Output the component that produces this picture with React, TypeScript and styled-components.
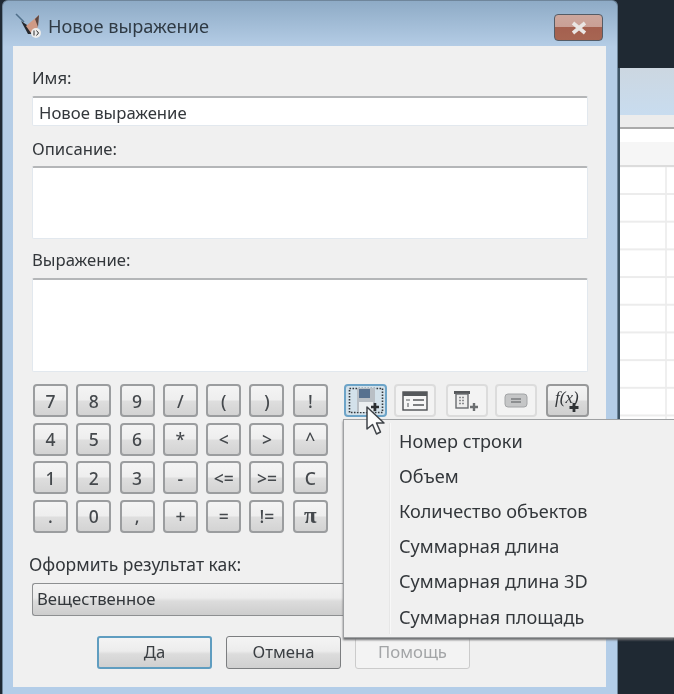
import React from "react";
import styled, { createGlobalStyle } from "styled-components";

const Global = createGlobalStyle`
  html, body { margin: 0; padding: 0; background: #1f2933; }
  * { box-sizing: border-box; }
`;
const Page = styled.div`
  position: relative; width: 674px; height: 694px; overflow: hidden; display: flex;
  background: #1f2933; font-family: "Noto Sans", "DejaVu Sans", sans-serif; color: #33383d;
  filter: blur(0.45px);
`;
const Win = styled.div`
  width: 616px; height: 694px; flex: none; margin-left: 2px; border-radius: 6px 6px 0 0;
  border: 1px solid #6f869b; border-bottom: 0;
  background: linear-gradient(180deg, #8eabc6 0, #b5cde6 46px, #b3cde8 100%);
  display: flex; flex-direction: column; padding: 0 11px 7px 10px;
`;
const TitleBar = styled.div`
  height: 45px; flex: none; display: flex; align-items: center; position: relative; gap: 7px;
`;
const TitleText = styled.span`
  font-size: 18.2px; color: #2f3a44; margin-top: 5px;
`;
const Close = styled.div`
  position: absolute; right: 3px; top: 13px; width: 49px; height: 27px; border-radius: 4px;
  border: 1.5px solid #555c66;
  background: linear-gradient(180deg, #cda79d 0, #c9a096 47%, #a4604f 48%, #a76552 100%);
  display: flex; align-items: center; justify-content: center;
`;
const Client = styled.div`
  flex: 1; background: #f0f0f0; padding: 22px 18px 0 19px; display: flex; flex-direction: column;
  position: relative;
`;
const Label = styled.div`
  font-size: 16.7px; line-height: 20px; height: 20px; color: #33373b;
`;
const ResultLabel = styled(Label)`
  font-size: 17.5px; margin-left: -3px; margin-top: -1px; margin-bottom: 1px;
`;
const Field = styled.div<{ $h: number; $mt: number; $mb: number }>`
  height: ${p => p.$h}px; margin-top: ${p => p.$mt}px; margin-bottom: ${p => p.$mb}px; background: #fff;
  flex: none; border: 1px solid #e2e8ee; border-top: 2px solid #b4b6b8; border-radius: 2px;
  padding: 3px 6px; font-size: 16.7px; color: #33373b;
`;
const Tools = styled.div`
  display: flex; height: 171px; margin-top: 12px; flex: none;
`;
const Keypad = styled.div`
  display: grid; grid-template-columns: repeat(7, 35px); grid-template-rows: repeat(4, 33px);
  column-gap: 8.3px; row-gap: 5.67px; width: 311px; margin-left: 1px; flex: none; align-content: start;
`;
const Key = styled.div<{ $serif?: boolean }>`
  border: 2px solid #9b9d9f; border-radius: 4px; color: #45494d;
  font-family: ${p => p.$serif ? '"Liberation Serif", serif' : "inherit"};
  font-size: ${p => p.$serif ? "23px" : "17.5px"};
  font-weight: ${p => p.$serif ? 700 : 500};
  display: flex; align-items: center; justify-content: center;
  background: linear-gradient(180deg, #f4f4f4 0, #eeeeee 48%, #dedede 52%, #d3d3d3 100%);
`;
const IconRow = styled.div`
  display: flex; height: 33px;
`;
const ToolBtn = styled.div<{ $w: number; $ml?: number; $state?: "focus" | "edge" }>`
  width: ${p => p.$w}px; height: 33px; margin-left: ${p => p.$ml ?? 0}px; border-radius: 4px; flex: none;
  display: flex; align-items: center; justify-content: center;
  border: ${p => p.$state === "focus" ? "2.5px solid #6da4c8" : p.$state === "edge" ? "2px solid #98999a" : "2px solid #dcdcdc"};
  background: ${p => p.$state === "focus" ? "#d3e1ea" : p.$state === "edge"
    ? "linear-gradient(180deg,#f3f3f3 0,#ececec 48%,#dadada 52%,#cfcfcf 100%)" : "#f3f3f3"};
`;
const Combo = styled.div`
  height: 33px; margin-top: 8px; width: 330px; flex: none; border: 1px solid #8d8f91; border-radius: 3px 0 0 3px; border-right: 0;
  padding: 4px 4px; font-size: 16.7px; line-height: 21px; color: #33373b;
  background: linear-gradient(180deg, #f3f3f3 0, #ececec 45%, #dcdcdc 55%, #cdcdcd 100%);
`;
const Actions = styled.div`
  display: flex; gap: 14px; margin-top: 20px; padding-left: 65px;
`;
const ActionBtn = styled.div<{ $state?: "default" | "off" }>`
  width: 115px; height: 33px; border-radius: 3px; font-size: 16.7px; display: flex; align-items: center; justify-content: center;
  padding-bottom: 3px;
  border: ${p => p.$state === "default" ? "2px solid #5f9dc0" : p.$state === "off" ? "1px solid #cbcbcb" : "1.5px solid #7c7e80"};
  color: ${p => p.$state === "off" ? "#a3a5a7" : "#3a3e42"};
  background: ${p => p.$state === "off" ? "#f3f3f3"
    : "linear-gradient(180deg,#f4f4f4 0,#ececec 45%,#dcdcdc 55%,#d0d0d0 100%)"};
`;
const Behind = styled.div`
  flex: 1; margin-top: 68px; display: flex; flex-direction: column; height: 570px;
  border-left: 2px solid #3d5364;
`;
const BehindHead = styled.div`
  height: 47px; flex: none; background: linear-gradient(180deg, #ccd7e1 0, #c8dcef 100%);
`;
const BehindStrip = styled.div`
  height: 14px; flex: none; background: #ececec; border-bottom: 2px solid #aaa;
`;
const HeaderRow = styled.div`
  height: 38px; flex: none; border-bottom: 2px solid #dcdcdc;
  background: linear-gradient(180deg, #fff 0, #fff 35%, #f6f6f6 36%, #f6f6f6 100%);
`;
const BehindGrid = styled.div`
  flex: 1; background-color: #fff;
  background-image: linear-gradient(#ececec 2px, transparent 2px), linear-gradient(90deg, #efefef 2px, transparent 2px);
  background-size: 100% 27.7px, 100% 100%; background-position: 0 26px, 45px 0;
`;
const Menu = styled.div`
  position: absolute; left: 343px; top: 419px; width: 331px; height: 219px; background: #f0f0f0;
  border: 1px solid #9fa1a3; border-right: 0; box-shadow: 0 2px 2px #6d6f71;
  display: flex; flex-direction: column; padding: 3px 0 0 0;
`;
const MenuGutter = styled.div`
  position: absolute; left: 45px; top: 3px; bottom: 3px; width: 2px; background: #e6e6e6; border-right: 1px solid #f8f8f8;
`;
const MenuItem = styled.div`
  height: 35.2px; padding-left: 55px; display: flex; align-items: center; font-size: 18.1px; color: #33373b;
`;
const Cursor = styled.svg`
  position: absolute; left: 365px; top: 405px;
`;
const AppIcon = styled.svg` flex: none; margin-left: 2px; margin-top: 5px; `;

const keys = ["7","8","9","/","(",")","!","4","5","6","*","<",">","^","1","2","3","-","<=",">=","C",".","0",",","+","=","!=","π"];
const items = ["Номер строки","Объем","Количество объектов","Суммарная длина","Суммарная длина 3D","Суммарная площадь"];

export default function App() {
  return (
    <Page>
      <Global />
      <Win>
        <TitleBar>
          <AppIcon width="26" height="26" viewBox="0 0 26 26">
            <path d="M1 1 L9 9" stroke="#4f6f8a" strokeWidth="1.6" />
            <path d="M6 8 L13 21 L21 21 L12 12 Z" fill="#26282c" />
            <path d="M11 13 L24 2 L22 19 L16 20 Z" fill="#cf9a86" />
            <path d="M20 6 L24 2 L23 14 Z" fill="#5b4640" />
            <circle cx="21" cy="20" r="5" fill="#ececec" />
            <path d="M19 17.5 v5 M21.5 17.5 l2 2.5 l-2 2.5" stroke="#2e2e2e" strokeWidth="1" fill="none" />
          </AppIcon>
          <TitleText>Новое выражение</TitleText>
          <Close>
            <svg width="18" height="14" viewBox="0 0 18 14">
              <path d="M3 2 L15 12 M15 2 L3 12" stroke="#e9e6e4" strokeWidth="3.6" />
            </svg>
          </Close>
        </TitleBar>
        <Client>
          <Label>Имя:</Label>
          <Field $h={30} $mt={8} $mb={13}>Новое выражение</Field>
          <Label>Описание:</Label>
          <Field $h={73} $mt={7} $mb={11}></Field>
          <Label>Выражение:</Label>
          <Field $h={94} $mt={8} $mb={0}></Field>
          <Tools>
            <Keypad>
              {keys.map((k, i) => <Key key={i} $serif={k === "π"}>{k}</Key>)}
            </Keypad>
            <IconRow>
              <ToolBtn $w={43} $state="focus">
                <svg width="36" height="27" viewBox="0 0 36 27">
                  <rect x="1.5" y="1.5" width="33" height="24" fill="none" stroke="#33373b" strokeWidth="1.6" strokeDasharray="1.6 1.4" />
                  <rect x="9" y="1" width="18" height="24" fill="#b9bfc5" />
                  <rect x="11" y="2" width="11" height="9" fill="#57718f" />
                  <rect x="11" y="15" width="14" height="10" fill="#eceff1" />
                  <path d="M27 16 v8 M23 20 h8" stroke="#2b2e31" strokeWidth="2.6" />
                </svg>
              </ToolBtn>
              <ToolBtn $w={42} $ml={7}>
                <svg width="26" height="20" viewBox="0 0 26 20">
                  <rect x="1" y="1" width="24" height="18" fill="#f6f6f6" stroke="#4c4f52" strokeWidth="1.4" />
                  <rect x="1" y="1" width="24" height="4" fill="#55585b" />
                  <path d="M11 9 h11 M11 14 h11" stroke="#55585b" strokeWidth="1.4" />
                  <path d="M4 9 h4 M6 12 v4" stroke="#8b8e90" strokeWidth="1.6" />
                </svg>
              </ToolBtn>
              <ToolBtn $w={42} $ml={10}>
                <svg width="28" height="24" viewBox="0 0 28 24">
                  <path d="M1 2 h16 v3 h-16 z" fill="#55585b" />
                  <rect x="3" y="5" width="12" height="14" fill="#eee" stroke="#696c6f" strokeWidth="1.4" />
                  <path d="M6 8.5 h6 M6 11.5 h6 M6 14.5 h6" stroke="#8a8c8f" strokeWidth="1.3" strokeDasharray="2 1" />
                  <path d="M21 14 v8 M17 18 h8" stroke="#6b6e70" strokeWidth="2.4" />
                </svg>
              </ToolBtn>
              <ToolBtn $w={42} $ml={7}>
                <svg width="24" height="15" viewBox="0 0 24 15">
                  <rect x="1" y="1" width="22" height="13" rx="3" fill="#c5c6c7" stroke="#a2a4a6" />
                  <path d="M7 6 h10 M7 9 h10" stroke="#56595c" strokeWidth="1.2" />
                </svg>
              </ToolBtn>
              <ToolBtn $w={43} $ml={9} $state="edge">
                <svg width="32" height="26" viewBox="0 0 32 26">
                  <text x="3" y="15" fontFamily="Liberation Serif, serif" fontStyle="italic" fontSize="17" fill="#33363a">f(x)</text>
                  <path d="M22 15 v9 M17.5 19.5 h9" stroke="#2f3235" strokeWidth="2.8" />
                </svg>
              </ToolBtn>
            </IconRow>
          </Tools>
          <ResultLabel>Оформить результат как:</ResultLabel>
          <Combo>Вещественное</Combo>
          <Actions>
            <ActionBtn $state="default">Да</ActionBtn>
            <ActionBtn>Отмена</ActionBtn>
            <ActionBtn $state="off">Помощь</ActionBtn>
          </Actions>
        </Client>
      </Win>
      <Behind>
        <BehindHead />
        <BehindStrip />
        <HeaderRow />
        <BehindGrid />
      </Behind>
      <Menu>
        <MenuGutter />
        {items.map(t => <MenuItem key={t}>{t}</MenuItem>)}
      </Menu>
      <Cursor width="24" height="34" viewBox="0 0 24 34">
        <path d="M2 2 L2 24 L7.5 19.5 L11.5 29 L15.5 27 L11.5 18 L19 18 Z" fill="#fbfbfb" stroke="#3f4348" strokeWidth="1.5" strokeLinejoin="round" />
      </Cursor>
    </Page>
  );
}
